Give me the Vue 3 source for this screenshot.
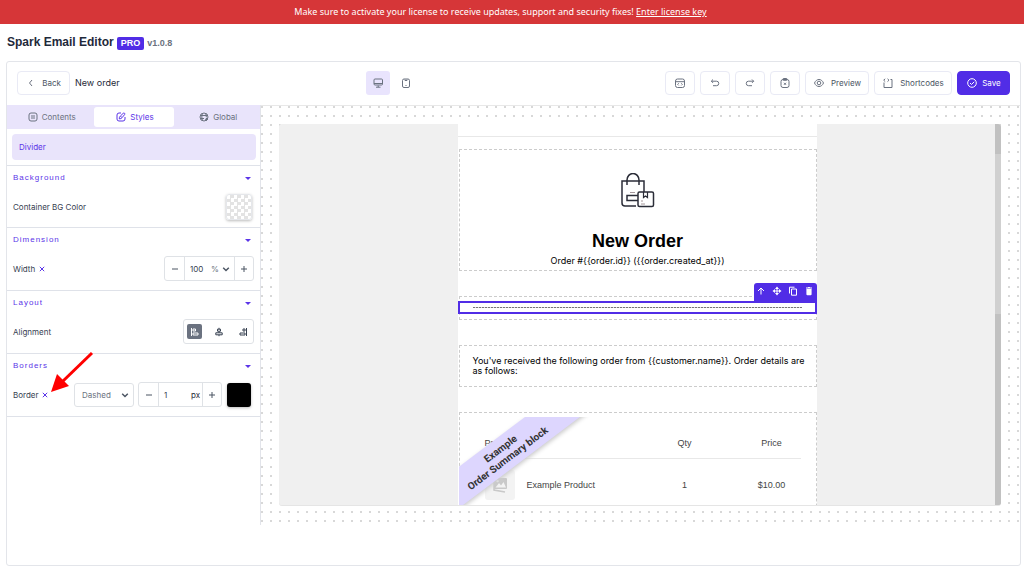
<script setup>
import { ref } from 'vue'

const title = ref('New order')
const width = ref('100')
const borderWidth = ref('1')
const greeting = "You've received the following order from {{customer.name}}. Order details are as follows:"
const orderLine = 'Order #{{order.id}} ({{order.created_at}})'
</script>

<template>
  <div class="app">
    <div class="notice">
      Make sure to activate your license to receive updates, support and security fixes! <a href="#">Enter license key</a>
    </div>

    <header class="heading">
      <h1>Spark Email Editor</h1>
      <span class="pro">PRO</span>
      <span class="version">v1.0.8</span>
    </header>

    <main class="card">
      <div class="toolbar">
        <div class="group">
          <button class="btn back">
            <svg width="10" height="10" viewBox="0 0 10 10"><path d="M6 2 3.500 5 6 8" /></svg>
            Back
          </button>
          <span class="name">{{ title }}</span>
        </div>

        <div class="group devices">
          <button class="device active" aria-label="Desktop">
            <svg width="12" height="12" viewBox="0 0 12 12"><rect x="2" y="2" width="8.500" height="6" rx="1" /><path d="M2 6.500h8.500M6.200 8.500v1.700M4 10.200h4.500" /></svg>
          </button>
          <button class="device" aria-label="Mobile">
            <svg width="12" height="12" viewBox="0 0 12 12"><rect x="2.500" y="2" width="7" height="8.500" rx="1.500" /><path d="M5 2.500v1h2v-1M5.500 8.500h1" /></svg>
          </button>
        </div>

        <div class="group actions">
          <button class="btn icon" aria-label="Custom code">
            <svg width="12" height="12" viewBox="0 0 12 12"><rect x="1.500" y="2" width="9" height="8.500" rx="2" /><path d="M1.500 4.700h9M4.700 6.300 3.700 7.400l1 1M7.300 6.300l1 1.100-1 1" /></svg>
          </button>
          <button class="btn icon" aria-label="Undo">
            <svg width="12" height="12" viewBox="0 0 12 12"><path d="M4 2.500 2.300 4.200 4 5.900M2.500 4.200h5a2.200 2.200 0 0 1 0 4.500H4" /></svg>
          </button>
          <button class="btn icon" aria-label="Redo">
            <svg width="12" height="12" viewBox="0 0 12 12"><path d="M8 2.500l1.700 1.700L8 5.900M9.500 4.200h-5a2.200 2.200 0 0 0 0 4.500H8" /></svg>
          </button>
          <button class="btn icon" aria-label="Clear">
            <svg width="12" height="12" viewBox="0 0 12 12"><rect x="2" y="2.500" width="8" height="8" rx="2" /><path d="M4.300 1.500h3.400v1.800H4.300zM5 5.800l2 2M7 5.800l-2 2" /></svg>
          </button>
          <button class="btn preview-btn">
            <svg width="12" height="12" viewBox="0 0 12 12"><path d="M1.500 6C3.500 1.300 8.500 1.300 10.500 6 8.500 10.700 3.500 10.700 1.500 6Z" /><circle cx="6" cy="6" r="1.800" /></svg>
            Preview
          </button>
          <button class="btn short-btn">
            <svg width="12" height="12" viewBox="0 0 12 12"><path d="M2 5.500v5h8V2.500H8.500M3.200 1.800 1.700 3.200l1.500 1.400M5.500 1.800 7 3.200 5.500 4.600" /></svg>
            Shortcodes
          </button>
          <button class="btn save">
            <svg width="12" height="12" viewBox="0 0 12 12"><circle cx="6" cy="6" r="4.300" /><path d="M4 6l1.500 1.500L8.200 4.800" /></svg>
            Save
          </button>
        </div>
      </div>

      <div class="workspace">
        <aside class="sidebar">
          <nav class="tabs">
            <button class="tab">
              <svg width="10" height="10" viewBox="0 0 10 10"><rect x="1" y="1" width="8" height="8" rx="2" /><path d="M3 4h4M3 6h4" /></svg>
              Contents
            </button>
            <button class="tab active">
              <svg width="10" height="10" viewBox="0 0 10 10"><path d="M5 1H3a2 2 0 0 0-2 2v4a2 2 0 0 0 2 2h4a2 2 0 0 0 2-2V5M3.300 6.900c0-1.500.2-2 1-2.800L7.200 1.300c1-.8 2.200.2 1.400 1.300L6 5.700c-.7.800-1.400 1.100-2.700 1.200ZM4.600 4.200l1.200 1.200" /></svg>
              Styles
            </button>
            <button class="tab">
              <svg width="10" height="10" viewBox="0 0 10 10"><circle cx="5" cy="5" r="4" /><path d="M1 3.500h8M1 6.500h4M3.500 1.200c-.9 2.500-.9 5 0 7.600M6.500 1.200c.6 1.300.8 2.600.8 3.800M7.500 5.800v3M6 7.300h3" /></svg>
              Global
            </button>
          </nav>

          <div class="element"><span>Divider</span></div>

          <section class="panel">
            <button class="panel-head">Background<i class="caret"></i></button>
            <div class="row">
              <label for="bg">Container BG Color</label>
              <button id="bg" class="swatch checker" aria-label="Container BG Color"></button>
            </div>
          </section>

          <section class="panel">
            <button class="panel-head">Dimension<i class="caret"></i></button>
            <div class="row">
              <label for="width">Width</label>
              <button class="clear" aria-label="Reset width"><svg width="6" height="6" viewBox="0 0 6 6"><path d="M.8.8l4.400 4.400M5.200.8.8 5.200" /></svg></button>
              <div class="stepper wide">
                <button aria-label="Decrease"><svg width="8" height="8" viewBox="0 0 8 8"><path d="M1 4h6" /></svg></button>
                <input id="width" v-model="width" />
                <span class="select unit">
                  <select aria-label="Width unit"><option>%</option></select>
                  <svg width="8" height="8" viewBox="0 0 8 8"><path d="M1.200 2.800 4 5.500l2.800-2.700" /></svg>
                </span>
                <button aria-label="Increase"><svg width="8" height="8" viewBox="0 0 8 8"><path d="M1 4h6M4 1v6" /></svg></button>
              </div>
            </div>
          </section>

          <section class="panel">
            <button class="panel-head">Layout<i class="caret"></i></button>
            <div class="row">
              <span class="label">Alignment</span>
              <div class="align">
                <button class="on" aria-label="Align left"><svg width="10" height="10" viewBox="0 0 10 10"><path d="M1.500 1v8M3 2h2.500v2H3zM3 6h5v2H3z" /></svg></button>
                <button aria-label="Align center"><svg width="10" height="10" viewBox="0 0 10 10"><path d="M5 .8v1.400M5 4.200v1.600M5 7.800v1.400M3.500 2.200h3v2h-3zM1.800 5.800h6.400v2H1.800z" /></svg></button>
                <button aria-label="Align right"><svg width="10" height="10" viewBox="0 0 10 10"><path d="M8.500 1v8M7 2H5v2h2zM7 6H2v2h5z" /></svg></button>
              </div>
            </div>
          </section>

          <section class="panel borders">
            <button class="panel-head">Borders<i class="caret"></i></button>
            <div class="row">
              <label for="border">Border</label>
              <button class="clear" aria-label="Reset border"><svg width="6" height="6" viewBox="0 0 6 6"><path d="M.8.8l4.400 4.400M5.200.8.8 5.200" /></svg></button>
              <span class="select style">
                <select aria-label="Border style"><option>Dashed</option></select>
                <svg width="8" height="8" viewBox="0 0 8 8"><path d="M1.200 2.800 4 5.500l2.800-2.700" /></svg>
              </span>
              <div class="stepper narrow">
                <button aria-label="Decrease"><svg width="8" height="8" viewBox="0 0 8 8"><path d="M1 4h6" /></svg></button>
                <input id="border" v-model="borderWidth" />
                <span class="px">px</span>
                <button aria-label="Increase"><svg width="8" height="8" viewBox="0 0 8 8"><path d="M1 4h6M4 1v6" /></svg></button>
              </div>
              <button class="swatch black" aria-label="Border color"></button>
            </div>
            <svg class="pointer" width="44" height="44" viewBox="0 0 44 44"><path d="M42 2 12 31" stroke="#f00" stroke-width="3" /><path d="M1 41 7 23 19 35Z" fill="#f00" stroke="none" /></svg>
          </section>
        </aside>

        <div class="canvas">
          <div class="preview">
            <div class="email">
              <div class="spacer"></div>

              <div class="block intro">
                <svg class="bag" width="34" height="36" viewBox="0 0 34 36">
                  <path d="M15 33H4a3 3 0 0 1-3-3V8h22v11M6 12V7a5.500 6 0 0 1 12 0v5" />
                  <path d="M17 22.500H6v5h11" />
                  <rect x="17" y="19" width="15.500" height="14.500" rx="1.500" />
                  <path d="M22.500 19v5.500l2-1.500 2 1.500V19" stroke-width="1.200" />
                  <path d="M9 19.500h5M20 28h2M20 31h4" stroke="#a5989c" stroke-width="1" />
                </svg>
                <h2>New Order</h2>
                <p>{{ orderLine }}</p>
              </div>

              <div class="block divider">
                <div class="selected">
                  <hr />
                  <div class="tools">
                    <button aria-label="Select parent"><svg width="10" height="10" viewBox="0 0 10 10"><path d="M5 8.500V2M2 5l3-3 3 3" /></svg></button>
                    <button aria-label="Move"><svg width="10" height="10" viewBox="0 0 10 10"><path d="M5 2v6M2 5h6" /><path class="solid" d="M5 .5 7 3H3zM5 9.500 3 7h4zM.5 5 3 3v4zM9.500 5 7 7V3z" /></svg></button>
                    <button aria-label="Duplicate"><svg width="10" height="10" viewBox="0 0 10 10"><path d="M1.500 7.500V1.200h5M3.500 3h5v6.200h-5z" /></svg></button>
                    <button aria-label="Delete"><svg width="10" height="10" viewBox="0 0 10 10"><path class="solid" d="M2 1.500h1.800L4.300 1h1.400l.5.500H8v1H2zM2.400 3h5.200v5.200a1 1 0 0 1-1 1H3.400a1 1 0 0 1-1-1z" /></svg></button>
                  </div>
                </div>
              </div>

              <div class="block greeting">{{ greeting }}</div>

              <div class="block order">
                <table>
                  <colgroup><col class="c-thumb" /><col /><col class="c-qty" /><col class="c-price" /></colgroup>
                  <thead>
                    <tr><th colspan="2">Product</th><th class="num">Qty</th><th class="num">Price</th></tr>
                  </thead>
                  <tbody>
                    <tr>
                      <td class="thumb">
                        <span><svg width="18" height="18" viewBox="0 0 18 18"><path d="M3 4v10l11 2" stroke="#c9c9c9" stroke-width="1.500" /><rect x="3" y="2" width="13" height="11" rx="1" fill="#c9c9c9" /><path d="M4.500 11.500 8 7l2 2.500L12.500 6l2.500 5.500Z" fill="#f3f3f3" /><circle cx="6.500" cy="5" r="1.200" fill="#f3f3f3" /></svg></span>
                      </td>
                      <td>Example Product</td><td class="num">1</td><td class="num">$10.00</td>
                    </tr>
                  </tbody>
                </table>
                <div class="ribbon"><div>Example<br />Order Summary block</div></div>
              </div>
            </div>
            <div class="scrollbar"><i></i></div>
          </div>
        </div>
      </div>
    </main>
  </div>
</template>

<style>
body { margin: 0; background: #fff; }
</style>

<style scoped>
* { box-sizing: border-box; }
.app {
  display: flex;
  flex-direction: column;
  height: 100vh;
  font: 8px/12px Inter, "Liberation Sans", sans-serif;
  color: #374151;
}
button, input, select { font: inherit; color: inherit; margin: 0; padding: 0; border: 0; background: none; }
button { display: flex; align-items: center; justify-content: center; }
svg { flex: none; fill: none; stroke: currentColor; }
.notice {
  flex: none;
  height: 24px;
  padding-right: 23px;
  background: #d63638;
  color: #fff;
  text-align: center;
  font: 9px/24px "Noto Sans", sans-serif;
}
.notice a { color: inherit; }
.heading { display: flex; align-items: center; height: 36px; padding: 0 7px; flex: none; }
h1 { margin: 0 3px 0 0; font: bold 12px/14px "Liberation Sans", sans-serif; color: #1e293b; }
.pro { padding: 0 4px; margin: 2px 3px 0 0; border-radius: 2px; background: #512de6; color: #fff; font: bold 9px/13px "Liberation Sans", sans-serif; }
.version { margin-top: 2px; font: bold 9px/13px "Liberation Sans", sans-serif; color: #6b7280; }
.card {
  flex: 1;
  min-height: 0;
  display: flex;
  flex-direction: column;
  margin: 1px 3px 8px 6px;
  padding-bottom: 40px;
  border: 1px solid #e3e5ea;
  border-radius: 3px;
}
.toolbar { display: flex; flex: none; justify-content: space-between; align-items: center; height: 43px; padding: 0 10px 1px; }
.group { display: flex; align-items: center; gap: 5px; }
.devices { gap: 4px; }
.name { font-size: 9px; color: #1f2937; }
.btn { height: 24px; gap: 6px; border: 1px solid #e9eaf5; border-radius: 4px; color: #4b5563; background: #fff; }
.btn svg, .device svg { color: #6b7280; }
.back { width: 53px; }
.icon { width: 30px; }
.preview-btn { width: 64px; }
.short-btn { width: 78px; }
.btn.save { width: 53px; gap: 4px; background: #512de6; border-color: #512de6; color: #fff; }
.btn.save svg { color: #fff; }
.device { width: 24px; height: 24px; border-radius: 3px; color: #4b5563; }
.device.active { background: #e9e4fd; }
.workspace { flex: 1; min-height: 0; display: flex; }
.sidebar { width: 254px; flex: none; border-right: 1px solid #e2e4ea; }
.tabs { display: grid; grid-template-columns: 1fr 80px 1fr; height: 24px; padding: 2px 0; background: #e9e4fb; }
.tab { gap: 4px; padding-left: 3px; color: #6b7280; border-radius: 3px; }
.tab.active { background: #fff; color: #5b35e8; }
.element { margin: 5px 4px 5px 5px; padding: 7px; border-radius: 4px; background: #e9e4fb; color: #5b35e8; }
.panel { border-top: 1px solid #dfe2e9; padding-bottom: 4px; }
.panel + .panel { padding-bottom: 5px; }
.panel-head { width: 100%; height: 24px; padding: 0 9px 0 6px; justify-content: space-between; font: 8px/12px "Liberation Sans", sans-serif; letter-spacing: 1px; color: #5b35e8; }
.caret { border: 3px solid transparent; border-top-color: #5b35e8; border-bottom: 0; }
.row { display: flex; align-items: center; height: 33px; padding: 0 6px; }
.row label, .row .label { color: #374151; }
.clear { margin-left: 4px; color: #5b35e8; }
.swatch { width: 26px; height: 26px; margin-left: auto; margin-right: 2px; border-radius: 3px; box-shadow: 0 1px 3px #bbb; }
.checker { background: conic-gradient(#e3e3e3 25%, #fff 0 50%, #e3e3e3 0 75%, #fff 0) 0 0 / 7px 7px; border: 1px solid #e5e7eb; }
.black { width: 24px; height: 24px; margin-right: 3px; background: #000; }
.stepper { display: flex; height: 25px; border: 1px solid #dfe2e6; border-radius: 3px; color: #4b5563; }
.stepper > button { width: 19px; }
.stepper > input { min-width: 0; flex: 1; padding-left: 5px; border-left: 1px solid #dfe2e6; outline: 0; color: #374151; }
.stepper > button:last-child { border-left: 1px solid #dfe2e6; }
.wide { width: 90px; margin-left: auto; }
.narrow { width: 84px; margin-left: 4px; }
.select { display: flex; align-items: center; color: #6b7280; }
.select select { appearance: none; outline: 0; }
.select svg { color: #4b5563; stroke-width: 1.500; }
.unit { gap: 3px; padding-right: 4px; }
.px { padding-right: 2px; align-self: center; color: #1f2937; }
.style { width: 60px; height: 24px; margin-left: auto; padding: 0 4px 0 7px; justify-content: space-between; border: 1px solid #dfe2e6; border-radius: 3px; }
.narrow + .swatch { margin-left: 5px; }
.align { display: flex; justify-content: space-between; align-items: center; width: 71px; height: 25px; margin-left: auto; padding: 0 3px; border: 1px solid #dfe2e6; border-radius: 3px; }
.align button { width: 15px; height: 15px; border-radius: 2px; }
.align .on { background: #6b7280; color: #fff; }
.borders { position: relative; border-bottom: 1px solid #dfe2e9; }
.pointer { position: absolute; left: 43px; top: -3px; }
.canvas {
  flex: 1;
  min-width: 0;
  padding: 18px 19px 19px 18px;
  border-top: 1px solid #e8e8e8;
  background: radial-gradient(circle at 1px 1px, #d8d8d8 1px, transparent 1px) 0 0 / 9px 9px;
}
.preview { position: relative; display: flex; justify-content: center; height: 100%; overflow: hidden; border-radius: 3px; background: #f0f0f0; border-bottom: 1px solid #e5e5e5; }
.email { width: 359px; flex: none; margin-right: 6px; background: #fff; color: #000; font-size: 9px; line-height: 10px; }
.spacer { height: 13px; margin-bottom: 12px; border-bottom: 1px solid #e8e8e8; }
.block { margin: 0 0 25px 1px; border: 1px dashed #ccc; }
.intro { height: 122px; padding-top: 23px; text-align: center; }
.bag { display: block; margin: 0 auto 22px; stroke: #2b2d38; stroke-width: 1.500; }
h2 { margin: 0 0 4px; font: bold 18px/20px "Liberation Sans", sans-serif; }
p { margin: 0; line-height: 12px; }
.divider { height: 24px; padding: 4px 0; }
.selected { position: relative; height: 13px; margin: 0 -1px 0 -2px; padding: 4px 13px; border: 2px solid #512de6; }
hr { height: 1px; margin: 0; border: 0; background: repeating-linear-gradient(90deg, #777 0 2px, #ddd 2px 3px); }
.tools { position: absolute; right: -2px; bottom: 10px; display: flex; justify-content: space-around; width: 63px; height: 19px; padding-bottom: 3px; border-radius: 3px 3px 0 0; background: #512de6; color: #fff; }
.solid { fill: currentColor; stroke: none; }
.greeting { height: 42px; padding: 10px 8px 10px 13px; }
.order { position: relative; height: 120px; padding: 5px 15px 0 25px; }
table { width: 100%; border-collapse: collapse; table-layout: fixed; color: #444; font: 9px/12px "Liberation Sans", sans-serif; }
th, td { padding: 0; text-align: left; font-weight: normal; }
th { height: 40px; padding-top: 10px; border-bottom: 1px solid #e8e8e8; }
td { height: 54px; }
.num { text-align: center; }
.c-thumb { width: 42px; }
.c-qty { width: 116px; }
.c-price { width: 58px; }
.thumb span { display: grid; place-items: center; width: 30px; height: 30px; border-radius: 3px; background: #f3f3f3; }
.thumb svg { stroke: none; }
.ribbon { position: absolute; left: -1px; top: 4px; width: 150px; height: 100px; overflow: hidden; }
.ribbon div { position: absolute; left: -55px; top: 20px; width: 200px; height: 33px; padding-top: 5px; transform: rotate(-37deg); background: #ddd6fe; box-shadow: 0 2px 4px #ccc; color: #333; text-align: center; font: bold 10px/12px Roboto, sans-serif; }
.scrollbar { position: absolute; top: 0; right: 0; bottom: 0; width: 6px; padding-top: 30px; background: #c1c1c1; }
.scrollbar i { display: block; height: 160px; background: #d0d0d0; }
</style>
